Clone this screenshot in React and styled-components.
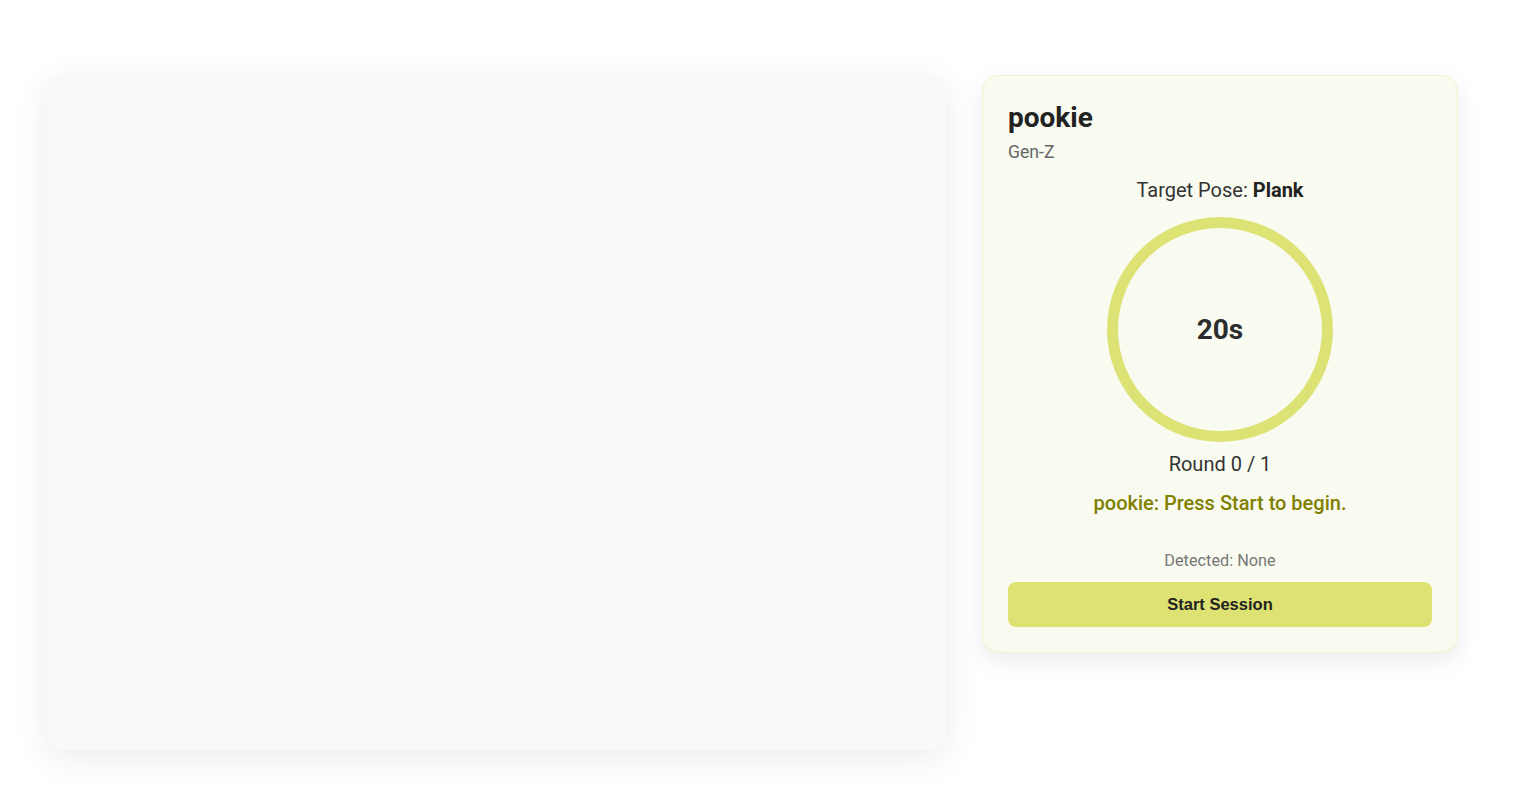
import React from "react";
import styled, { createGlobalStyle } from "styled-components";

const GlobalStyle = createGlobalStyle`
  html, body {
    margin: 0;
    padding: 0;
    background: #ffffff;
    font-family: Roboto, "Liberation Sans", Arial, sans-serif;
    color: #222;
  }
`;

const Page = styled.div`
  display: flex;
  justify-content: flex-start;
  align-items: flex-start;
  gap: 36px;
  padding: 75px 0 36px 47px;
`;

const VideoPanel = styled.div`
  width: 899px;
  height: 675px;
  background: #f8f9fa;
  border-radius: 16px;
  box-shadow: 0 8px 36px rgba(0, 0, 0, 0.08);
`;

const Card = styled.div`
  width: 476px;
  box-sizing: border-box;
  padding: 25px;
  background: #f9fbf0;
  border: 1px solid #eef3cc;
  border-radius: 16px;
  box-shadow: 0 8px 24px rgba(0, 0, 0, 0.08);
  display: flex;
  flex-direction: column;
`;

const Name = styled.h2`
  margin: 0;
  font-size: 28px;
  font-weight: 700;
  line-height: 34px;
  color: #222;
`;

const Generation = styled.div`
  margin-top: 7px;
  font-size: 17.6px;
  line-height: 21px;
  color: #666;
`;

const Target = styled.div`
  margin-top: 15px;
  text-align: center;
  font-size: 20px;
  line-height: 25px;
  color: #333;

  b {
    font-weight: 700;
    color: #222;
  }
`;

const Ring = styled.div`
  align-self: center;
  margin-top: 14px;
  width: 226px;
  height: 225px;
  box-sizing: border-box;
  border: 11px solid #dde274;
  border-radius: 50%;
  display: flex;
  align-items: center;
  justify-content: center;
  font-size: 28px;
  font-weight: 700;
  color: #2c2c2c;
`;

const Round = styled.div`
  margin-top: 9px;
  text-align: center;
  font-size: 20px;
  line-height: 26px;
  color: #333;
`;

const Message = styled.div`
  margin-top: 13px;
  text-align: center;
  font-size: 20px;
  font-weight: 500;
  line-height: 26px;
  color: #7f7f00;
`;

const Detected = styled.div`
  margin-top: 35px;
  text-align: center;
  font-size: 16.3px;
  line-height: 20px;
  color: #777;
`;

const StartButton = styled.button`
  margin-top: 11px;
  height: 45px;
  width: 100%;
  border: none;
  border-radius: 8px;
  background: #dde272;
  font-family: "Liberation Sans", Arial, sans-serif;
  font-size: 16.5px;
  font-weight: 700;
  color: #222;
  cursor: pointer;
`;

export default function App() {
  return (
    <>
      <GlobalStyle />
      <Page>
        <VideoPanel />
        <Card>
          <Name>pookie</Name>
          <Generation>Gen-Z</Generation>
          <Target>
            Target Pose: <b>Plank</b>
          </Target>
          <Ring>20s</Ring>
          <Round>Round 0 / 1</Round>
          <Message>pookie: Press Start to begin.</Message>
          <Detected>Detected: None</Detected>
          <StartButton>Start Session</StartButton>
        </Card>
      </Page>
    </>
  );
}
